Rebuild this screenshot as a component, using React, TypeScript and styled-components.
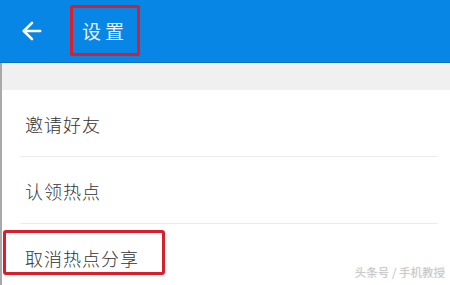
import React from 'react';
import styled, { createGlobalStyle } from 'styled-components';
import { ArrowLeft } from 'lucide-react';

const GlobalStyle = createGlobalStyle`
  html, body {
    margin: 0;
    padding: 0;
    background: #ffffff;
  }
  body {
    font-family: "Noto Sans CJK SC", "Noto Sans", sans-serif;
  }
`;

const Screen = styled.div`
  position: relative;
  width: 450px;
  height: 285px;
  overflow: hidden;
  background: #ffffff;
`;

const Header = styled.header`
  display: flex;
  align-items: center;
  height: 62px;
  background: #0786e6;
  border-bottom: 1px solid #0f6fc0;
  box-sizing: content-box;
`;

const BackButton = styled.button`
  display: flex;
  align-items: center;
  justify-content: center;
  width: 28px;
  height: 28px;
  margin-left: 18px;
  padding: 0;
  border: none;
  background: transparent;
  color: #ffffff;
`;

const Title = styled.h1`
  display: flex;
  align-items: center;
  box-sizing: border-box;
  height: 51px;
  margin: 0 0 1px 24px;
  padding: 0 9px 0 9px;
  border: 3px solid #d7202b;
  border-radius: 2px;
  font-size: 19px;
  font-weight: 400;
  letter-spacing: 4px;
  color: #e8f3ff;
`;

const Body = styled.div`
  border-left: 2px solid #a9a9a9;
  height: 222px;
`;

const Band = styled.div`
  height: 27px;
  background: #f0f0f0;
  border-top: 1px solid #e4f0f0;
  box-sizing: border-box;
`;

const Row = styled.div<{ $last?: boolean }>`
  display: flex;
  align-items: center;
  height: 67px;
  margin: 0 12px 0 18px;
  border-bottom: ${p => (p.$last ? 'none' : '1px solid #ebebeb')};
  box-sizing: border-box;
`;

const Label = styled.span<{ $marked?: boolean }>`
  display: flex;
  align-items: center;
  box-sizing: border-box;
  font-size: 18px;
  font-weight: 300;
  letter-spacing: 1px;
  color: #333333;
  ${p =>
    p.$marked
      ? `
    height: 45px;
    margin: -10px 0 0 -17px;
    padding: 10px 23px 0 19px;
    border: 3px solid #d7202b;
    border-radius: 3px;
  `
      : `
    padding-left: 5px;
    margin-top: 2px;
  `}
`;

const Watermark = styled.div`
  position: absolute;
  right: 5px;
  bottom: 5px;
  font-size: 11.5px;
  color: #c4c4c4;
  text-shadow: 0 0 1px #ffffff, 0 0 2px #e6e6e6;
`;

const items = [
  { label: '邀请好友' },
  { label: '认领热点' },
  { label: '取消热点分享', marked: true },
];

export default function App() {
  return (
    <Screen>
      <GlobalStyle />
      <Header>
        <BackButton aria-label="返回">
          <ArrowLeft size={28} strokeWidth={2.2} />
        </BackButton>
        <Title>设置</Title>
      </Header>
      <Body>
        <Band />
        {items.map((item, i) => (
          <Row key={item.label} $last={i === items.length - 1}>
            <Label $marked={item.marked}>{item.label}</Label>
          </Row>
        ))}
      </Body>
      <Watermark>头条号 / 手机教授</Watermark>
    </Screen>
  );
}
